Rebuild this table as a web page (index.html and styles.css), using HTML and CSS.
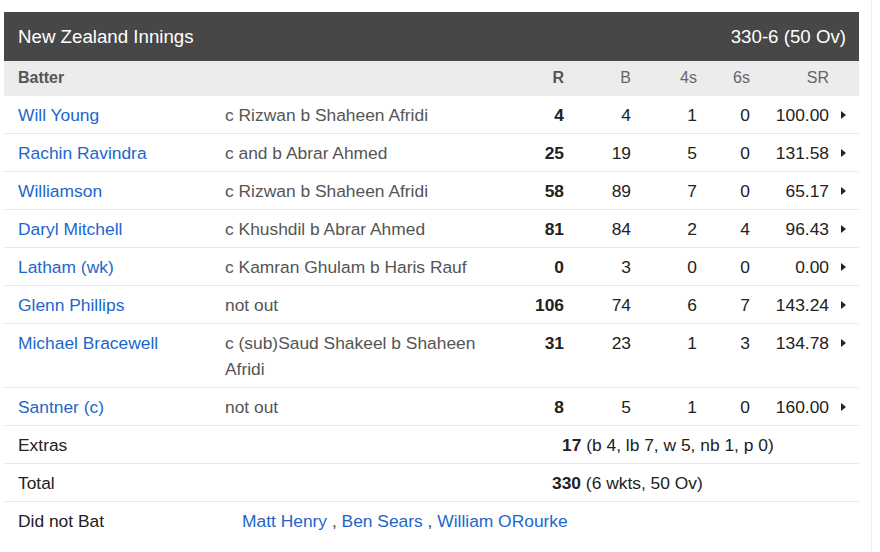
FILE: index.html
```html
<!DOCTYPE html>
<html>
<head>
<meta charset="utf-8">
<link rel="stylesheet" href="styles.css">
</head>
<body>
<div class="page">
  <div class="card">
    <div class="title">
      <span>New Zealand Innings</span>
      <span>330-6 (50 Ov)</span>
    </div>
    <div class="row head">
      <div class="batter-h">Batter</div>
      <div></div>
      <div class="num strong">R</div>
      <div class="num">B</div>
      <div class="num">4s</div>
      <div class="num">6s</div>
      <div class="num">SR</div>
      <div></div>
    </div>

    <div class="row">
      <a class="name">Will Young</a>
      <div class="out">c Rizwan b Shaheen Afridi</div>
      <div class="num runs">4</div><div class="num">4</div><div class="num">1</div><div class="num">0</div><div class="num">100.00</div><div class="arrow"></div>
    </div>
    <div class="row">
      <a class="name">Rachin Ravindra</a>
      <div class="out">c and b Abrar Ahmed</div>
      <div class="num runs">25</div><div class="num">19</div><div class="num">5</div><div class="num">0</div><div class="num">131.58</div><div class="arrow"></div>
    </div>
    <div class="row">
      <a class="name">Williamson</a>
      <div class="out">c Rizwan b Shaheen Afridi</div>
      <div class="num runs">58</div><div class="num">89</div><div class="num">7</div><div class="num">0</div><div class="num">65.17</div><div class="arrow"></div>
    </div>
    <div class="row">
      <a class="name">Daryl Mitchell</a>
      <div class="out">c Khushdil b Abrar Ahmed</div>
      <div class="num runs">81</div><div class="num">84</div><div class="num">2</div><div class="num">4</div><div class="num">96.43</div><div class="arrow"></div>
    </div>
    <div class="row">
      <a class="name">Latham (wk)</a>
      <div class="out">c Kamran Ghulam b Haris Rauf</div>
      <div class="num runs">0</div><div class="num">3</div><div class="num">0</div><div class="num">0</div><div class="num">0.00</div><div class="arrow"></div>
    </div>
    <div class="row">
      <a class="name">Glenn Phillips</a>
      <div class="out">not out</div>
      <div class="num runs">106</div><div class="num">74</div><div class="num">6</div><div class="num">7</div><div class="num">143.24</div><div class="arrow"></div>
    </div>
    <div class="row">
      <a class="name">Michael Bracewell</a>
      <div class="out">c (sub)Saud Shakeel b Shaheen Afridi</div>
      <div class="num runs">31</div><div class="num">23</div><div class="num">1</div><div class="num">3</div><div class="num">134.78</div><div class="arrow"></div>
    </div>
    <div class="row">
      <a class="name">Santner (c)</a>
      <div class="out">not out</div>
      <div class="num runs">8</div><div class="num">5</div><div class="num">1</div><div class="num">0</div><div class="num">160.00</div><div class="arrow"></div>
    </div>

    <div class="row">
      <div class="label">Extras</div>
      <div></div>
      <div class="span extras"><b>17</b> (b 4, lb 7, w 5, nb 1, p 0)</div>
    </div>
    <div class="row">
      <div class="label">Total</div>
      <div></div>
      <div class="span total"><b>330</b> (6 wkts, 50 Ov)</div>
    </div>
    <div class="row last">
      <div class="label">Did not Bat</div>
      <div class="dnb"><a class="name">Matt Henry</a> , <a class="name">Ben Sears</a> , <a class="name">William ORourke</a></div>
    </div>
  </div>
</div>
</body>
</html>
```
FILE: styles.css
```css
html, body {
  margin: 0;
  padding: 0;
  background: #fff;
}
body {
  font-family: "Liberation Sans", Arial, sans-serif;
  color: #222;
}
.page {
  width: 872px;
  min-height: 552px;
  box-sizing: border-box;
  border-right: 1px solid #ececec;
  padding: 12px 0 0 4px;
}
.card {
  width: 855px;
}
.title {
  height: 49px;
  background: #474747;
  color: #fff;
  font-size: 18.7px;
  display: flex;
  align-items: center;
  justify-content: space-between;
  padding: 0 13px 0 14px;
}
.row {
  display: grid;
  grid-template-columns: 207px 265px 74px 67px 66px 53px 79px 1fr;
  padding: 6px 0 5px 14px;
  line-height: 26px;
  font-size: 17.4px;
  border-bottom: 1px solid #e8e8e8;
  align-items: start;
}
.row.last {
  border-bottom: none;
}
.row.head {
  background: #ececec;
  font-size: 16px;
  color: #666;
  padding: 4px 0 5px 14px;
  border-bottom: none;
}
.batter-h {
  font-weight: bold;
  color: #555;
}
.strong {
  font-weight: bold;
  color: #555;
}
.num {
  text-align: right;
}
.runs {
  font-weight: bold;
}
.name {
  color: #1d66cc;
  text-decoration: none;
}
.out {
  color: #555;
}
.label {
  color: #222;
}
.arrow {
  position: relative;
}
.arrow::after {
  content: "";
  position: absolute;
  left: 12px;
  top: 9px;
  border-top: 4px solid transparent;
  border-bottom: 4px solid transparent;
  border-left: 5px solid #222;
}
.span {
  grid-column: 3 / 9;
  color: #222;
}
.extras {
  padding-left: 72px;
}
.total {
  padding-left: 62px;
}
.dnb {
  grid-column: 2 / 9;
  padding-left: 17px;
  color: #444;
}
```
